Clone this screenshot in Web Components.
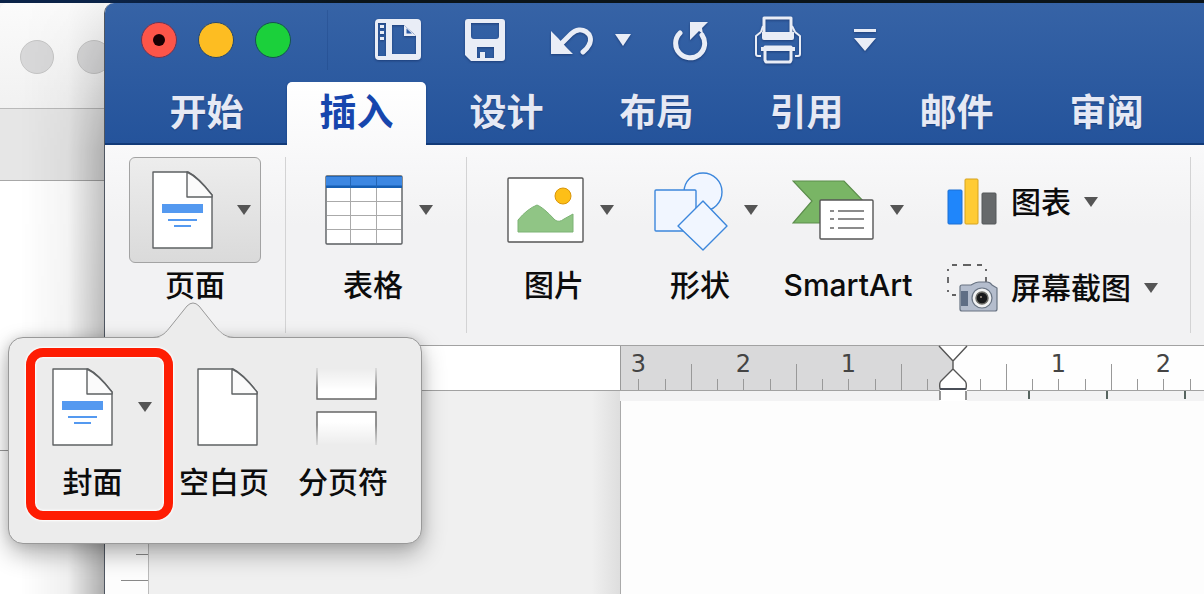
<!DOCTYPE html>
<html lang="zh-CN">
<head>
<meta charset="utf-8">
<meta name="viewport" content="width=device-width, initial-scale=1">
<title>文档编辑器</title>
<style>
  html, body { margin: 0; height: 100%; overflow: hidden; }
  body {
    font-family: Inter, "Noto Sans CJK SC", sans-serif;
    background: #0a1628;
    color: #0c0c0c;
  }
</style>
</head>
<body>
<office-desktop></office-desktop>
<script>
const ICONS = {
  gallery: [46, 42, `<path fill="#e9edf6" fill-rule="evenodd" d="M4 0H42a4 4 0 0 1 4 4V37a4 4 0 0 1-4 4H4a4 4 0 0 1-4-4V4a4 4 0 0 1 4-4ZM3 4V37H11V4ZM17 6V35H41V17L29 6Z"/><path fill="#2c5aa3" d="M31 8V15H39Z"/><path fill="#e9edf6" d="M29 6 41 17H29Z"/><path fill="#2c5aa3" d="M31.500 9.500V14.500H37Z"/><path fill="#e9edf6" d="M5 6h4v3H5zM5 12h4v3H5zM5 18h4v3H5z"/>`],
  save: [40, 42, `<path fill="#e9edf6" fill-rule="evenodd" d="M3 0H37a3 3 0 0 1 3 3V39a3 3 0 0 1-3 3H6L0 36V3a3 3 0 0 1 3-3ZM6 4V17a3 3 0 0 0 3 3H31a3 3 0 0 0 3-3V4ZM12 28V39H15V33H20V39H29V28Z"/>`],
  undo: [46, 32, `<path fill="#e9edf6" d="M2 7V30H24L17 23 9 14Z"/><path fill="none" stroke="#e9edf6" stroke-width="5" stroke-linecap="round" d="M12 20 22 10C32 0 46 10 40 21Q38 25 34 28"/>`],
  redo: [36, 42, `<path fill="none" stroke="#e9edf6" stroke-width="5" stroke-linecap="round" d="M7 14A14.500 14.500 0 1 0 29 16"/><path fill="#e9edf6" d="M17 3H35L29 9 30 15 26 12 17 21Z"/>`],
  print: [48, 48, `<g fill="none" stroke="#e9edf6" stroke-width="3" stroke-linejoin="round"><path d="M10 16V2H37V16" /><path stroke-width="2" d="M9 10 7 16M38 10 41 16M7 16 2 20V38Q2 40 4 40H7M41 16 46 20V38Q46 40 44 40H41"/><path d="M11 31V44l1 2H36l1-2V31Z"/></g><path fill="#e9edf6" d="M8 16H40V22q0 2-2 2H10q-2 0-2-2ZM7 31H41V35H7Z"/>`],
  more: [22, 22, `<path fill="#e9edf6" d="M0 0H22V3H0ZM0 9H22L11 22Z"/>`],
  page: [61, 78, `<path fill="#fff" stroke="#5e6163" stroke-width="1.4" stroke-linejoin="round" d="M1 1H36Q46 6 60 24V77H1Z"/><path fill="#fbfbfb" stroke="#5e6163" stroke-width="1.4" stroke-linejoin="round" d="M35 1V26H60V24Q46 6 35 1Z"/>`],
  table: [78, 70, `<rect x="1" y="1" width="76" height="68" rx="1" fill="#fff" stroke="#5a5d60" stroke-width="1.4"/><path fill="#3c87e2" d="M1 1H77V11H1Z"/><path fill="#155fb4" d="M1 10.500H77V13H1Z"/><path stroke="#2265b5" d="M25.500 1V12M51.500 1V12M1 1.500H77"/><path stroke="#aaa" fill="none" d="M25.500 13V68M51.500 13V68M2 26.500H76M2 40.500H76M2 54.500H76"/>`],
  picture: [77, 66, `<rect x="1" y="1" width="75" height="64" rx="1" fill="#fff" stroke="#565656" stroke-width="1.4"/><circle cx="56" cy="19" r="8" fill="#fdbf17" stroke="#d99509"/><path fill="#90c585" stroke="#7db375" d="M11 55V43Q20 32 30 28 36 30 48 43 52 46 57 42L66 37V55Z"/>`],
  shapes: [74, 81, `<g fill="#f1f6ff" stroke="#3c87dc" stroke-width="1.4"><circle cx="49" cy="22" r="19"/><rect x="1" y="20" width="41" height="41" rx="1"/><path stroke-linejoin="round" d="M49 31 73 56 49 80 24 56Z"/></g>`],
  smartart: [82, 60, `<path fill="#79b565" stroke="#5c8d4c" stroke-width="1.200" d="M1 1H52L76 26V43H1L20 21Z"/><rect x="28" y="20" width="53" height="39" rx="1" fill="#fff" stroke="#555" stroke-width="1.4"/><path stroke="#666" stroke-width="1.6" d="M38 31h4M38 39h4M38 48h4M46 31H72M46 39H72M46 48H72"/>`],
  chart: [50, 48, `<rect x="1" y="12" width="14" height="34" rx="1" fill="#1f86fb" stroke="#1c6fd3"/><rect x="18" y="1" width="13" height="45" rx="1" fill="#ffcb34" stroke="#d6a31e"/><rect x="35" y="15" width="14" height="31" rx="1" fill="#66696b" stroke="#55585a"/>`],
  screenshot: [52, 50, `<path fill="none" stroke="#333" stroke-width="1.400" d="M6 2h5M17 2h8M31 2h5M2 6v2M2 14v6M2 27v2M40 6v2M40 14v6M6 32h4"/><path fill="#b4bdcd" stroke="#687382" stroke-width="1.200" d="M16 22H25Q30 19 33 19H41Q44 19 46 22L51 25V46q0 2-2 2H16q-2 0-2-2V24q0-2 2-2Z"/><path fill="#5f6e85" d="M15 28h7V43H15z"/><circle cx="36" cy="35" r="10" fill="#f1f2f3" stroke="#687382" stroke-width="1.200"/><circle cx="36" cy="35" r="6" fill="#18191b" stroke="#6b6b66" stroke-width="1.500"/><circle cx="35" cy="34" r="1" fill="#a3968a"/>`],
  pagebreak: [61, 78, `<defs><linearGradient id="u" x2="0" y2="1"><stop stop-color="#fff" stop-opacity="0"/><stop offset=".7" stop-color="#fff"/></linearGradient><linearGradient id="d" x2="0" y2="1"><stop offset=".3" stop-color="#fff"/><stop offset="1" stop-color="#fff" stop-opacity="0"/></linearGradient><linearGradient id="s" gradientUnits="userSpaceOnUse" x1="0" y1="1" x2="0" y2="20"><stop stop-color="#666" stop-opacity=".2"/><stop offset="1" stop-color="#666"/></linearGradient><linearGradient id="t" gradientUnits="userSpaceOnUse" x1="0" y1="57" x2="0" y2="77"><stop stop-color="#666"/><stop offset="1" stop-color="#666" stop-opacity=".2"/></linearGradient></defs><path fill="url(#u)" stroke="url(#s)" stroke-width="1.400" d="M1 0V31H60V0"/><path fill="url(#d)" stroke="url(#t)" stroke-width="1.400" d="M1 77V44H60V77"/>`],
  arrow: [14, 12, `<path fill="#555" d="M0 1H14L7 11Z"/>`],
  arrowlight: [16, 12, `<path fill="#e9edf6" d="M0 0H16L8 12Z"/>`]
};
ICONS.cover = [61, 78, ICONS.page[2] + `<path fill="#5499f0" d="M10 33H51V42H10ZM16 48H45V50H16ZM22 54H39V56H22Z"/>`];

function define(name, html, setup) {
  const template = document.createElement("template");
  template.innerHTML = html;
  customElements.define(name, class extends HTMLElement {
    constructor() {
      super();
      this.attachShadow({ mode: "open" }).append(template.content.cloneNode(true));
    }
    connectedCallback() { if (setup) setup(this, this.shadowRoot); }
  });
}

define("ui-icon", `<style>:host{display:block;flex:none}svg{display:block}</style>`, (el, root) => {
  const [w, h, body] = ICONS[el.getAttribute("name")];
  root.innerHTML += `<svg width="${w}" height="${h}" viewBox="0 0 ${w} ${h}" aria-hidden="true">${body}</svg>`;
});

define("back-window", `
<style>
  :host { display: grid; grid-template-rows: 106px 72px 1fr; overflow: hidden; border-top-left-radius: 8px;
    background: #fff; position: relative; }
  :host::after { content: ""; position: absolute; inset: 0;
    background: linear-gradient(to right, transparent 20%, rgba(0,0,0,.06) 65%, rgba(0,0,0,.32));
    mask-image: linear-gradient(rgba(0,0,0,.1), rgba(0,0,0,.7) 25%, #000); }
  .bar { display: flex; gap: 23px; padding: 37px 20px; background: linear-gradient(#fbfbfb, #f1f1f1); border-bottom: 1px solid #b9b9b9; box-sizing: border-box; }
  i { flex: none; width: 32px; height: 32px; border: 1px solid #c5c5c5; border-radius: 50%; background: #d8d8d9; }
  .tools { background: #e6e6e6; border-bottom: 1px solid #a8a8a8; box-sizing: border-box; }
  .body { padding-top: 269px; }
  .body::before { content: ""; display: block; width: 8px; height: 1px; background: #999; }
</style>
<div class="bar"><i></i><i></i></div><div class="tools"></div><div class="body"></div>`);

define("window-lights", `
<style>
  :host { display: flex; gap: 21px; }
  button { width: 36px; height: 36px; padding: 0; border: 1px solid #24466f; border-radius: 50%; background: #fdbd22; display: grid; place-items: center; }
  .close { background: #fc5549; border-color: #6a3555; }
  .close::after { content: ""; width: 12px; height: 12px; border-radius: 50%; background: #170003; }
  .zoom { background: #1bd03b; border-color: #175052; }
</style>
<button class="close" aria-label="关闭"></button><button aria-label="最小化"></button><button class="zoom" aria-label="缩放"></button>`);

define("quick-access", `
<style>
  :host { display: flex; align-items: center; gap: 33px; }
  button { display: grid; place-items: center; width: 54px; height: 54px; padding: 0; border: 0; background: none;
    filter: drop-shadow(0 1px 1px rgba(10,30,80,.5)); }
  .split { display: flex; gap: 16px; }
  .split .menu { width: 16px; }
</style>
<button aria-label="模板库"><ui-icon name="gallery"></ui-icon></button>
<button aria-label="保存"><ui-icon name="save"></ui-icon></button>
<div class="split"><button aria-label="撤销"><ui-icon name="undo"></ui-icon></button><button class="menu" aria-label="撤销列表"><ui-icon name="arrowlight"></ui-icon></button></div>
<button aria-label="恢复"><ui-icon name="redo"></ui-icon></button>
<button aria-label="打印"><ui-icon name="print"></ui-icon></button>
<button aria-label="自定义"><ui-icon name="more"></ui-icon></button>`);

define("title-bar", `
<style>
  :host { display: flex; align-items: center; height: 76px; padding: 0 36px 2px; box-sizing: border-box; }
  hr { width: 1px; height: 60px; border: 0; margin: 0 43px 0 36px; background: rgba(20,55,120,.25); }
</style>
<window-lights></window-lights><hr><quick-access></quick-access>`);

define("ribbon-tab", `
<style>
  :host { display: block; flex: none; width: 139px; }
  button { width: 100%; height: 100%; padding: 0 0 2px; border: 0; border-radius: 5px 5px 0 0; background: none;
    font: 700 37px/56px Inter, "Noto Sans CJK SC", sans-serif; color: #e6e9f4; text-shadow: 0 1px 1px rgba(10,30,80,.4); }
  :host([selected]) button { background: linear-gradient(#fff, #f9f9fa); color: #1746ad; text-shadow: none; box-shadow: 0 0 2px #12397c; clip-path: inset(-2px -2px 0); }
</style>
<button role="tab"><slot></slot></button>`, (el, root) => {
  root.querySelector("button").setAttribute("aria-selected", el.hasAttribute("selected"));
});

define("ribbon-tabs", `
<style>
  :host { display: flex; gap: 11px; height: 63px; margin-top: 3px; padding-left: 32px; overflow: hidden;
    background: linear-gradient(#123a78, #123a78) 0 100% / 100% 2px no-repeat; }
</style>
<slot></slot>`);

define("ribbon-button", `
<style>
  :host { display: block; flex: none; width: 138px; --inset: 12px; }
  button { width: 100%; padding: 0; border: 0; background: none; color: inherit; font: 500 30px/44px Inter, "Noto Sans CJK SC", sans-serif; }
  .body { display: flex; justify-content: center; align-items: center; gap: 16px; height: 106px; padding-left: var(--inset); box-sizing: border-box; border-radius: 6px; }
  .label { display: block; white-space: nowrap; }
  :host([flush]) { --inset: 0px; width: 142px; }
  :host([pressed]) { width: 132px; }
  :host([pressed]) .body { gap: 24px; border: 1px solid #a3a3a3; background: linear-gradient(#ededed, #dadada); }
</style>
<button aria-haspopup="true"><span class="body"><slot name="icon"></slot><ui-icon name="arrow"></ui-icon></span><span class="label"><slot></slot></span></button>`);

define("ribbon-row", `
<style>
  :host { display: block; }
  button { display: flex; align-items: center; gap: 13px; height: 86px; padding: 0; border: 0; background: none; color: inherit;
    font: 500 30px/44px Inter, "Noto Sans CJK SC", sans-serif; white-space: nowrap; }
  .icon { width: 52px; display: grid; place-items: center; }
</style>
<button aria-haspopup="true"><span class="icon"><slot name="icon"></slot></span><slot></slot><ui-icon name="arrow"></ui-icon></button>`);

define("ribbon-divider", `<style>:host { display: block; flex: none; width: 1px; height: 176px; margin: 0 18px 0 24px; background: #d3d3d4; }</style>`);

define("ribbon-panel", `
<style>
  :host { display: flex; height: 200px; padding: 12px 0 0 24px; box-sizing: border-box; overflow: hidden; background: linear-gradient(#f9f9fa, #f2f2f3 40%, #f2f2f3); }
  .group { display: flex; gap: 8px; }
  .stack { display: flex; flex-direction: column; justify-content: center; height: 176px; padding: 0 8px 0 19px; }
</style>
<ribbon-button pressed><ui-icon slot="icon" name="cover"></ui-icon>页面</ribbon-button>
<ribbon-divider></ribbon-divider>
<ribbon-button><ui-icon slot="icon" name="table"></ui-icon>表格</ribbon-button>
<ribbon-divider></ribbon-divider>
<div class="group">
  <ribbon-button><ui-icon slot="icon" name="picture"></ui-icon>图片</ribbon-button>
  <ribbon-button><ui-icon slot="icon" name="shapes"></ui-icon>形状</ribbon-button>
  <ribbon-button flush><ui-icon slot="icon" name="smartart"></ui-icon>SmartArt</ribbon-button>
  <div class="stack">
    <ribbon-row><ui-icon slot="icon" name="chart"></ui-icon>图表</ribbon-row>
    <ribbon-row><ui-icon slot="icon" name="screenshot"></ui-icon>屏幕截图</ribbon-row>
  </div>
</div>
<ribbon-divider></ribbon-divider>`);

define("document-ruler", `
<style>
  :host { display: flex; height: 46px; box-sizing: border-box; border: solid #a2a2a2; border-width: 1px 0; background: #fff; }
  .blank { flex: none; width: 515px; }
  .scale { position: relative; flex: 1; min-width: 0; border-left: 1px solid #999; box-sizing: border-box;
    background: linear-gradient(to right, #d9d9da 332px, #fefefe 332px); }
  .cells { display: flex; overflow: hidden; }
  .cell { flex: none; width: 105px; text-align: center; color: #444; font: 24px/36px "DejaVu Sans", sans-serif; height: 44px;
    background:
      linear-gradient(#999, #999) 0 100% / 1px 26px no-repeat,
      linear-gradient(#999, #999) 26px 100% / 1px 11px no-repeat,
      linear-gradient(#999, #999) 52px 100% / 1px 11px no-repeat,
      linear-gradient(#999, #999) 79px 100% / 1px 11px no-repeat; }
  .cell:first-child { margin-left: -35px; }
  .indent { position: absolute; left: 316px; top: -1px; }
</style>
<div class="blank"></div>
<div class="scale"><div class="cells"></div>
<svg class="indent" width="32" height="56" viewBox="0 0 32 56" aria-hidden="true">
  <path fill="#fff" d="M3 45H30V56H3Z"/>
  <path fill="#fff" stroke="#555" stroke-width="1.4" stroke-linejoin="round" d="M2 1 16 16 30 1M16 16V24L28 36Q30 38 29 44H3Q2 38 4 36L16 24"/>
  <path stroke="#4a4f58" stroke-width="2" d="M3 44H29"/><path stroke="#666" stroke-width="1.4" d="M3 46V55M29 46V55"/>
</svg></div>`, (el, root) => {
  const cells = root.querySelector(".cells");
  const draw = () => {
    const count = Math.ceil((cells.clientWidth + 35) / 105);
    cells.replaceChildren(...Array.from({ length: count }, (_, i) => {
      const cell = document.createElement("span");
      cell.className = "cell";
      cell.textContent = i === 3 ? "" : Math.abs(i - 3);
      return cell;
    }));
  };
  draw();
  window.addEventListener("resize", draw);
});

define("document-canvas", `
<style>
  :host { display: grid; grid-template-columns: 44px 471px 1fr; flex: 1; min-height: 0; background: #f0f0f0; }
  .side { background: #fdfdfd; border-right: 1px solid #bbb; overflow: hidden; }
  .side svg { display: block; }
  .desk { background: linear-gradient(to right, transparent 94%, #dedede); }
  .main { display: flex; flex-direction: column; }
  .stops { height: 10px; flex: none; background: #f3f3f4; overflow: hidden; display: flex; gap: 76px; padding-left: 408px; }
  .stops i { flex: none; width: 2px; height: 8px; background: #56645f; }
  .sheet { flex: 1; background: #fdfdfd; border-left: 1px solid #aaa; }
</style>
<div class="side"><svg width="43" height="100%" aria-hidden="true"><defs><pattern id="t" width="43" height="105" patternUnits="userSpaceOnUse"><path stroke="#888" d="M16 84.500H43M31 58.500H43M31 31.500H43M31 5.500H43"/></pattern></defs><rect width="43" height="100%" fill="url(#t)"/></svg></div>
<div class="desk"></div>
<div class="main"><div class="stops"><i></i><i></i><i></i></div><div class="sheet"></div></div>`);

define("word-window", `
<style>
  :host { display: flex; flex-direction: column; min-width: 0; overflow: hidden; border-top-left-radius: 10px; border-left: 1px solid #4f5661; box-sizing: border-box; background: #f0f0f0; }
  header { flex: none; display: flow-root; background: linear-gradient(#3663a6, #24539b); }
</style>
<header><title-bar></title-bar>
<ribbon-tabs role="tablist"><ribbon-tab>开始</ribbon-tab><ribbon-tab selected>插入</ribbon-tab><ribbon-tab>设计</ribbon-tab><ribbon-tab>布局</ribbon-tab><ribbon-tab>引用</ribbon-tab><ribbon-tab>邮件</ribbon-tab><ribbon-tab>审阅</ribbon-tab></ribbon-tabs></header>
<ribbon-panel></ribbon-panel>
<document-ruler></document-ruler>
<document-canvas></document-canvas>`);

define("popover-item", `
<style>
  :host { display: block; flex: none; width: 102px; --inset: 6px; }
  button { display: flex; flex-direction: column; width: 100%; height: 172px; box-sizing: border-box; padding: 11px 0 0; border: 9px solid transparent; border-width: 9px 0; background: none; color: inherit;
    font: 500 30px/44px Inter, "Noto Sans CJK SC", sans-serif; }
  .body { display: flex; justify-content: center; align-items: center; gap: 25px; width: 100%; box-sizing: border-box; padding-left: var(--inset); margin-bottom: 14px; }
  .label { display: block; width: 100%; white-space: nowrap; }
  .body > ui-icon { display: none; }
  :host([marked]) { width: 147px; --inset: 18px; }
  :host([marked]) button { padding-right: 14px; border: 9px solid #fe1d03; border-radius: 17px; box-shadow: 0 0 2px 1px #fff, inset 0 0 2px 1px #fff; }
  :host([marked]) .body > ui-icon { display: block; }
</style>
<button role="menuitem"><span class="body"><slot name="icon"></slot><ui-icon name="arrow"></ui-icon></span><span class="label"><slot></slot></span></button>`);

define("page-popover", `
<style>
  :host { display: flex; width: 414px; height: 207px; box-sizing: border-box; padding: 10px 17px; border: 1px solid #999; border-radius: 15px; background: #ececec;
    box-shadow: 0 10px 24px rgba(0,0,0,.3), 0 0 12px rgba(0,0,0,.12); }
  .rest { display: flex; gap: 17px; }
  .tip { position: absolute; left: 139px; bottom: 100%; }
</style>
<svg class="tip" width="90" height="36" viewBox="0 0 90 36" aria-hidden="true"><path fill="#ececec" stroke="#999" d="M5 35.500C15 35 18 30 23 24L39 4Q45-2 51 4L67 24C72 30 76 35 86 35.500"/><path fill="#ececec" d="M10 36Q16 34 20 29H71Q75 34 81 36Z"/></svg>
<popover-item marked><ui-icon slot="icon" name="cover"></ui-icon>封面</popover-item>
<div class="rest">
  <popover-item><ui-icon slot="icon" name="page"></ui-icon>空白页</popover-item>
  <popover-item><ui-icon slot="icon" name="pagebreak"></ui-icon>分页符</popover-item>
</div>`);

define("office-desktop", `
<style>
  :host { display: grid; grid-template-columns: 104px minmax(0, 1fr); height: 100vh; box-sizing: border-box; padding-top: 3px; position: relative; overflow: hidden;
    background: linear-gradient(to right, #0b2348, #0b2348 104px, #0b1419 30%, #0b1419) 0 0 / 100% 3px no-repeat, #f4f4f5; }
  page-popover { position: absolute; left: 8px; top: 337px; }
</style>
<back-window></back-window><word-window></word-window><page-popover role="menu"></page-popover>`);
</script>
</body>
</html>
